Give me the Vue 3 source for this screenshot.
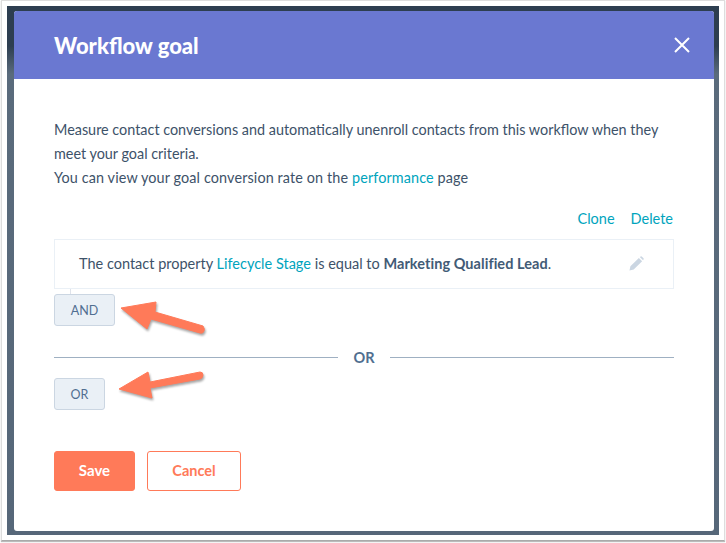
<template>
  <div class="page">
    <div class="frame">
      <div class="backdrop">
        <div class="modal">
          <header class="head">
            <h1>Workflow goal</h1>
            <svg class="close" width="18" height="18" viewBox="0 0 18 18">
              <path d="M2 2 L16 16 M16 2 L2 16" stroke="#fff" stroke-width="2" fill="none" />
            </svg>
          </header>

          <div class="body">
            <p class="intro">
              Measure contact conversions and automatically unenroll contacts from this workflow when they
              meet your goal criteria.<br />
              <span class="rate">You can view your goal conversion rate on the <a>performance</a> page</span>
            </p>

            <div class="actions">
              <a>Clone</a>
              <a>Delete</a>
            </div>

            <div class="rule">
              <span>
                The contact property <a>Lifecycle Stage</a> is equal to
                <b>Marketing Qualified Lead</b>.
              </span>
              <svg class="pencil" width="15" height="15" viewBox="0 0 16 16">
                <path d="M0.5 15.5 L1.5 11 L10.5 2 L14 5.5 L5 14.5 Z M11.5 1 L12.5 0.4 Q13 0.1 13.5 0.5 L15.5 2.5 Q15.9 3 15.6 3.5 L15 4.5 Z" fill="#cbd6e2" />
              </svg>
            </div>

            <button class="small and">AND</button>

            <div class="divider"><i></i><span>OR</span><i></i></div>

            <button class="small or">OR</button>

            <div class="footer">
              <button class="save">Save</button>
              <button class="cancel">Cancel</button>
            </div>
          </div>
        </div>
      </div>
    </div>

    <svg class="arrow arrow-and" width="100" height="60" viewBox="0 0 100 60">
      <path d="M1 8 L36 2 L35 12 L83 26 Q85 29 84 31 Q83 34 80 33 L31 19 L27 29 Z" fill="#ff7a59" stroke="#ff7a59" stroke-width="1" stroke-linejoin="round" />
    </svg>
    <svg class="arrow arrow-or" width="100" height="60" viewBox="0 0 100 60">
      <path d="M1 19 L30 2 L32 12 L82 2 Q85 2 85 5 Q85 8 82 9 L32 18 L34 28 Z" fill="#ff7a59" stroke="#ff7a59" stroke-width="1" stroke-linejoin="round" />
    </svg>
  </div>
</template>

<script setup>
</script>

<style>
html,
body {
  margin: 0;
  background: #fff;
}
</style>

<style scoped>
.page {
  position: relative;
  width: 726px;
  height: 543px;
  box-sizing: border-box;
  padding-left: 1px;
  font-family: Lato, "Liberation Sans", sans-serif;
  color: #3d5269;
  overflow: hidden;
}

.frame {
  width: 724px;
  height: 541px;
  box-sizing: border-box;
  padding: 5px 0 0 5px;
  background: #fff;
  border: 1px solid #ddd;
  border-bottom-color: #aaa;
  box-shadow: 0 1px 1px #bbb;
}

.backdrop {
  width: 712px;
  height: 529px;
  box-sizing: border-box;
  padding: 5px 5px 0 7px;
  background: linear-gradient(#2d3e50 0, #2d3e50 40px, #5a6b7c 68px, #566779 100%);
}

.modal {
  width: 700px;
  height: 520px;
  background: #fff;
  border-radius: 3px;
  overflow: hidden;
}

.head {
  height: 68px;
  background: #6a78d1;
  display: flex;
  align-items: center;
  justify-content: space-between;
  padding: 0 23px 0 40px;
}

h1 {
  margin: 0;
  font-size: 22px;
  font-weight: 900;
  color: #fff;
}

.body {
  padding: 39px 40px 0;
}

.intro {
  margin: 0;
  font-size: 14.4px;
  line-height: 24px;
}

.rate {
  letter-spacing: 0.12px;
}

a {
  color: #00a4bd;
}

.actions {
  display: flex;
  justify-content: flex-end;
  gap: 16px;
  margin-top: 17px;
  padding-right: 1px;
  font-size: 14.5px;
  line-height: 24px;
}

.rule {
  margin-top: 8px;
  height: 50px;
  box-sizing: border-box;
  border: 1px solid #eaf0f6;
  padding: 0 29px 2px 24px;
  display: flex;
  align-items: center;
  justify-content: space-between;
  font-size: 14.5px;
}

.rule b {
  font-weight: 700;
  color: #425b76;
  letter-spacing: 0.05px;
}

.small {
  display: block;
  height: 32px;
  box-sizing: border-box;
  background: #eaf0f6;
  border: 1px solid #cbd6e2;
  border-radius: 3px;
  font: 12.5px Lato, sans-serif;
  color: #506e91;
}

.and {
  position: relative;
  width: 61px;
  margin-top: 5px;
}

.and::before {
  content: "";
  position: absolute;
  left: 15px;
  top: -6px;
  width: 1px;
  height: 5px;
  background: #dfe3eb;
}

.or {
  width: 51px;
}

.divider {
  display: flex;
  align-items: center;
  margin: 19px 0 9px;
  height: 24px;
  font-size: 14.5px;
  font-weight: 700;
  color: #516f90;
}

.divider i {
  flex: 1;
  height: 1px;
  background: #9fb0c2;
}

.divider span {
  padding: 0 15px;
  width: 22px;
  text-align: center;
}

.footer {
  display: flex;
  gap: 12px;
  margin-top: 41px;
}

.footer button {
  height: 40px;
  box-sizing: border-box;
  padding: 0 0 2px;
  border-radius: 3px;
  border: 1px solid #ff7a59;
}

.save {
  width: 81px;
  background: #ff7a59;
  color: #fff;
  font: 700 15px Lato, sans-serif;
}

.cancel {
  width: 94px;
  background: #fff;
  color: #ff7a59;
  font: 700 14.5px Lato, sans-serif;
}

.arrow {
  position: absolute;
  filter: drop-shadow(1px 2px 1px rgba(0, 0, 0, 0.35));
}

.arrow-and {
  left: 120px;
  top: 300px;
}

.arrow-or {
  left: 118px;
  top: 370px;
}
</style>
